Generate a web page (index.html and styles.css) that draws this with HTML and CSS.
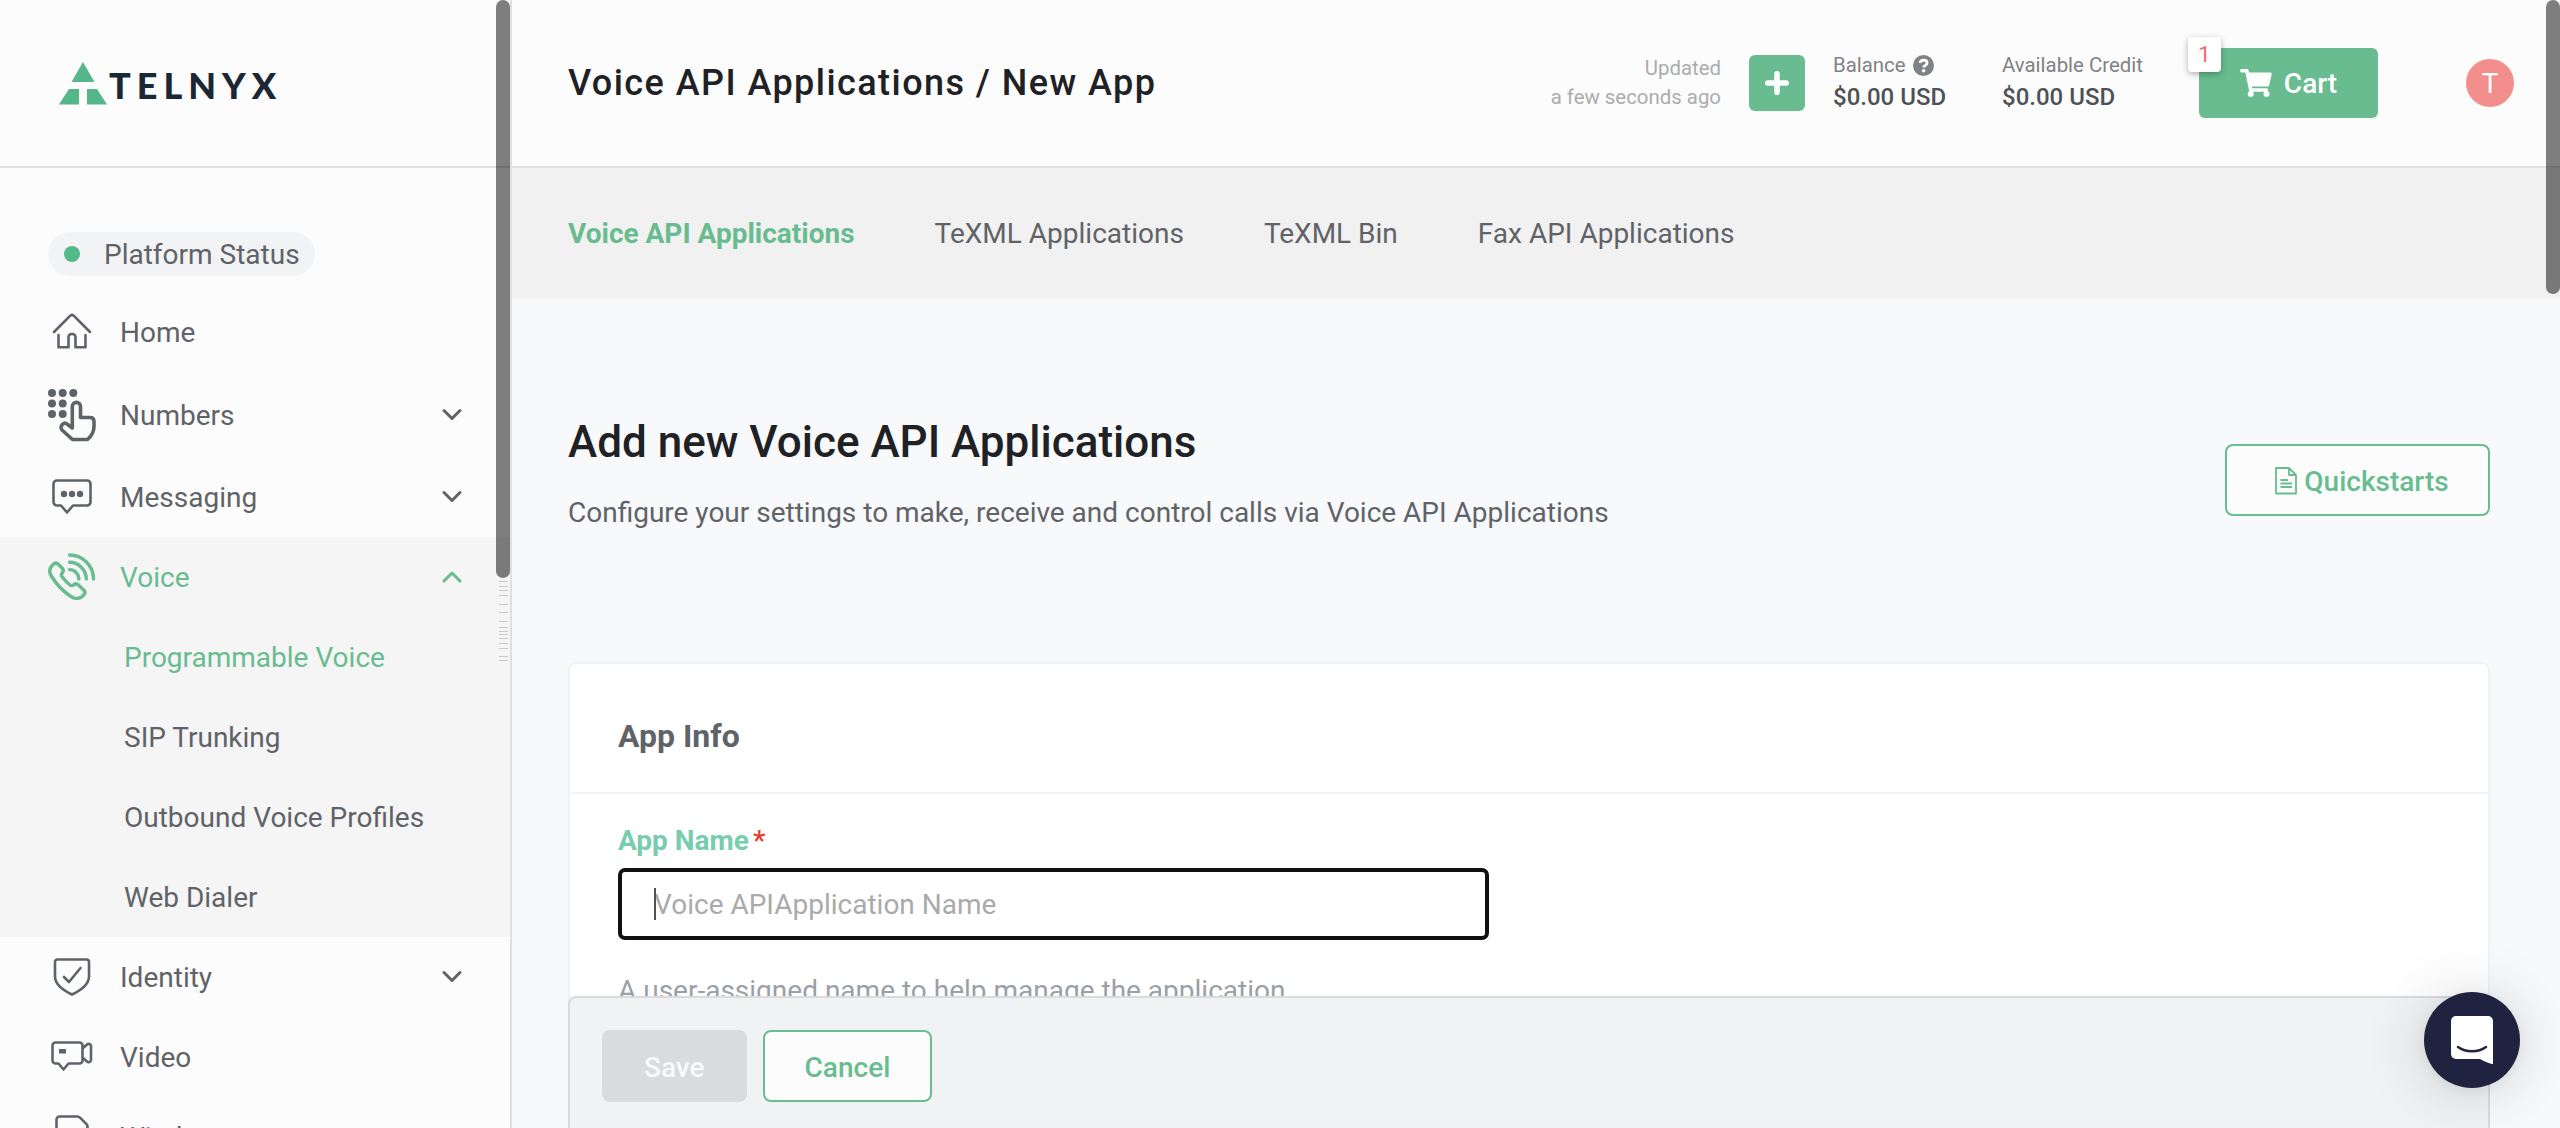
FILE: index.html
```html
<!DOCTYPE html>
<html lang="en">
<head>
<meta charset="utf-8">
<title>Voice API Applications / New App</title>
<link rel="stylesheet" href="styles.css">
</head>
<body>
<div class="app">
  <aside class="sidebar">
    <div class="brand">
      <svg class="brand-mark" width="48" height="43" viewBox="0 0 48 43"><path fill="#54b689" d="M24 0 35.500 20h-23zM10 27h10v15.500H0zM28 27h10l10 15.500H28z"/></svg>
      <span class="brand-name">TELNYX</span>
    </div>
    <nav class="nav">
      <a class="status"><i class="status-dot"></i><span>Platform Status</span></a>
      <a class="nav-row home">
        <svg class="ico" width="48" height="48" viewBox="0 0 48 48"><path d="M6 24 22.300 7.700a2.500 2.500 0 0 1 3.400 0L42 24M10.500 27v12.200h10V29a3 3 0 0 1 3-3h1a3 3 0 0 1 3 3v10.200h10V27"/></svg>
        <span>Home</span></a>
      <a class="nav-row numbers">
        <svg class="ico" width="48" height="54" viewBox="0 0 48 54"><g fill="#5f6368" stroke="none"><circle cx="4" cy="5" r="4"/><circle cx="14.700" cy="5" r="4"/><circle cx="25.300" cy="5" r="4"/><circle cx="4" cy="15.500" r="4"/><circle cx="14.700" cy="15.500" r="4"/><circle cx="4" cy="26" r="4"/><circle cx="14.700" cy="26" r="4"/></g><path stroke-width="3.600" d="M24.300 39V18.500a4 4 0 0 1 8.200 0V29.500h9.500c2.500 0 4 1.200 4 4v5c0 5-2.500 9.500-6.500 13H24.500L14 42c-1.500-1.600-1.200-4 .3-5.600 1.600-1.600 3.800-1.400 5.400.1l4.600 3.500"/></svg>
        <span>Numbers</span>
        <svg class="chev" width="20" height="14" viewBox="0 0 20 14"><path d="m2 2.500 8 8 8-8"/></svg></a>
      <a class="nav-row">
        <svg class="ico" width="48" height="48" viewBox="0 0 48 48"><path d="M9 7.500h30a3.500 3.500 0 0 1 3.500 3.500v18a3.500 3.500 0 0 1-3.500 3.500H25L19 39.500l-6-7H9A3.500 3.500 0 0 1 5.500 29V11A3.500 3.500 0 0 1 9 7.500z"/><g fill="#5f6368" stroke="none"><circle cx="16" cy="21" r="3.200"/><circle cx="24" cy="21" r="3.200"/><circle cx="32" cy="21" r="3.200"/></g></svg>
        <span>Messaging</span>
        <svg class="chev" width="20" height="14" viewBox="0 0 20 14"><path d="m2 2.500 8 8 8-8"/></svg></a>
      <div class="nav-group">
        <a class="nav-row active">
          <svg class="ico" width="48" height="48" viewBox="0 0 48 48"><path stroke-width="3.400" d="M5 11.500c2-2 4-1.500 5.500 0l3.800 3.800c1.500 1.500 1 3.500-.3 5-1 1.200-.7 2.500.3 3.800 2 2.800 4.500 5.500 7.500 7.800 1.300.9 2.600 1 3.800 0 1.500-1.200 3.500-1.200 4.800.1l5.300 5c1.500 1.500 1.600 3.300.2 4.900-3.300 4-8.300 4.500-12.600 1.800C15.500 38.700 8.500 31.500 3.300 23 .6 18.500 1.700 14.500 5 11.500zM21.500 2C34 2 45.500 12 45.500 26M21.500 9.300C30.500 9.300 38.300 17 38.300 26M21.500 16.600c5 0 9.300 4.400 9.300 9.400"/></svg>
          <span>Voice</span>
          <svg class="chev" width="20" height="14" viewBox="0 0 20 14"><path d="m2 11 8-8 8 8"/></svg></a>
        <a class="sub active"><span>Programmable Voice</span></a>
        <a class="sub"><span>SIP Trunking</span></a>
        <a class="sub"><span>Outbound Voice Profiles</span></a>
        <a class="sub"><span>Web Dialer</span></a>
      </div>
      <a class="nav-row">
        <svg class="ico" width="48" height="48" viewBox="0 0 48 48"><path d="M9.500 6.500h29A2.500 2.500 0 0 1 41 9v14.500C41 32 32.500 37.500 24 41.500 15.500 37.500 7 32 7 23.500V9a2.500 2.500 0 0 1 2.500-2.500zM16 24l5 5L32.500 15"/></svg>
        <span>Identity</span>
        <svg class="chev" width="20" height="14" viewBox="0 0 20 14"><path d="m2 2.500 8 8 8-8"/></svg></a>
      <a class="nav-row">
        <svg class="ico" width="48" height="48" viewBox="0 0 48 48"><path d="M7.500 9.500h24a3 3 0 0 1 3 3v15a3 3 0 0 1-3 3H20.500L15.500 36.500l-5-6h-3a3 3 0 0 1-3-3v-15a3 3 0 0 1 3-3zM34.500 15.500l4.500-4c1.500-1.200 4-.6 4 1.500v14c0 2.100-2.500 2.700-4 1.500l-4.500-4"/><path fill="#5f6368" stroke="none" d="M11 16h7v4.500h-7z"/></svg>
        <span>Video</span></a>
      <a class="nav-row">
        <svg class="ico" width="48" height="48" viewBox="0 0 48 48"><path d="M11.500 3.500h17.500a4 4 0 0 1 3 1.200l6.500 6.500a4 4 0 0 1 1 3V41a3 3 0 0 1-3 3h-25a3 3 0 0 1-3-3V6.500a3 3 0 0 1 3-3z"/></svg>
        <span>Wireless</span></a>
    </nav>
    <svg class="ticks" width="14" height="86" viewBox="0 0 14 86"><path stroke="#c9c9c9" stroke-width="1" d="M3 3.500h9M3 8.500h9M3 12.500h9M3 17.500h9M3 26.500h9M3 34.500h9M3 43.500h9M3 49.500h9M3 53.500h9M3 56.500h9M3 60.500h9M3 65.500h9M3 70.500h9M3 78.500h9M3 82.500h9"/></svg>
    <div class="thumb side-thumb"></div>
  </aside>

  <div class="page">
    <header class="topbar">
      <h1>Voice API Applications / New App</h1>
      <div class="updated"><span>Updated</span><span>a few seconds ago</span></div>
      <button class="add" aria-label="Add funds"><svg width="24" height="24" viewBox="0 0 24 24"><path fill="none" stroke="#fff" stroke-width="5.600" stroke-linecap="round" d="M12 2.800v18.400M2.800 12h18.400"/></svg></button>
      <div class="money balance"><div class="money-label"><span>Balance</span>
        <svg width="21" height="21" viewBox="0 0 21 21"><circle cx="10.500" cy="10.500" r="10.500" fill="#808285"/><path fill="none" stroke="#fff" stroke-width="2.800" d="M7 8c.4-1.900 1.700-2.900 3.500-2.900 2 0 3.600 1.100 3.600 2.800 0 2.500-3.400 2.300-3.400 4.600"/><circle cx="10.600" cy="15.800" r="1.800" fill="#fff"/></svg></div>
        <b>$0.00 USD</b></div>
      <div class="money"><div class="money-label"><span>Available Credit</span></div><b>$0.00 USD</b></div>
      <button class="cart"><svg width="32" height="28" viewBox="0 0 576 512"><path fill="#fff" d="M528.120 301.319l47.273-208C578.806 78.301 567.391 64 551.990 64H159.208l-9.166-44.810C147.758 8.021 137.930 0 126.529 0H24C10.745 0 0 10.745 0 24v16c0 13.255 10.745 24 24 24h69.883l70.248 343.435C147.325 417.100 136 435.222 136 456c0 30.928 25.072 56 56 56s56-25.072 56-56c0-15.674-6.447-29.835-16.824-40h209.647C430.447 426.165 424 440.326 424 456c0 30.928 25.072 56 56 56s56-25.072 56-56c0-22.172-12.888-41.332-31.579-50.405l5.517-24.276c3.413-15.018-8.002-29.319-23.403-29.319H218.117l-6.545-32h293.145c11.206 0 20.920-7.754 23.403-18.681z"/></svg><span>Cart</span><i class="badge">1</i></button>
      <div class="avatar">T</div>
    </header>
    <nav class="tabs">
      <a class="on">Voice API Applications</a><a>TeXML Applications</a><a>TeXML Bin</a><a>Fax API Applications</a>
    </nav>
    <main class="content">
      <div class="intro">
        <div>
          <h2>Add new Voice API Applications</h2>
          <p>Configure your settings to make, receive and control calls via Voice API Applications</p>
        </div>
        <button class="btn quick"><svg width="22" height="28" viewBox="0 0 22 28"><path fill="none" stroke="#68bc90" stroke-width="1.800" stroke-linejoin="round" d="M1 1h13l7 7v18.500H1zM14 1v7h7M5.500 13h7.500M5.500 16.500h11.500M5.500 20h11.500"/></svg><span>Quickstarts</span></button>
      </div>
      <section class="card">
        <h3>App Info</h3>
        <div class="form">
          <label><span>App Name</span><em>*</em></label>
          <div class="input"><i class="caret"></i><span>Voice APIApplication Name</span></div>
          <p>A user-assigned name to help manage the application</p>
        </div>
      </section>
    </main>
    <footer class="actions">
      <button class="btn save">Save</button>
      <button class="btn">Cancel</button>
    </footer>
  </div>
  <div class="thumb page-thumb"></div>
  <button class="chat" aria-label="Chat"><svg width="42" height="48" viewBox="0 0 42 48"><path fill="#fff" d="M5 0h32a5 5 0 0 1 5 5v43.300c-5-1.300-9-3-13-5.300H5a5 5 0 0 1-5-5V5a5 5 0 0 1 5-5z"/><path fill="none" stroke="#1f2340" stroke-width="2.500" stroke-linecap="round" d="M7 31c8 5.700 20 5.700 28 0"/></svg></button>
</div>
</body>
</html>
```
FILE: styles.css
```css
* { box-sizing: border-box; }
body { margin: 0; font-family: Roboto, sans-serif; font-size: 28px; color: #5f6368; }
button { font: inherit; padding: 0; border: 0; }
h1, h2, h3, p { margin: 0; }
i, em { font-style: normal; }
svg { flex: none; display: block; }
.app { position: relative; display: flex; width: 2560px; height: 1128px; overflow: hidden; background: #f8f9fb; }

.sidebar { position: relative; flex: none; width: 512px; border-right: 2px solid #e0e0e0; background: #fcfcfc; overflow: hidden; }
.brand { display: flex; align-items: flex-start; height: 168px; padding: 62px 0 0 59px; border-bottom: 2px solid #e0e0e0; }
.brand-name { margin: 2px 0 0 2px; font: 900 36px/43px Lato, sans-serif; letter-spacing: 6px; color: #1b2733; }
.nav { display: flex; flex-direction: column; }
.status { display: flex; align-items: center; align-self: flex-start; width: 267px; height: 44px; margin: 64px 0 16px 48px; padding-left: 16px; border-radius: 22px; background: #f1f3f4; }
.status-dot { width: 16px; height: 16px; margin-right: 24px; border-radius: 50%; background: #54b989; }
.nav-row { display: flex; align-items: center; flex: none; height: 80px; padding: 0 48px; gap: 24px; }
.nav-row.numbers { height: 85px; padding-top: 1px; }
.ico, .chev { fill: none; stroke: #5f6368; stroke-width: 2.6; stroke-linecap: round; stroke-linejoin: round; }
.chev { margin-left: auto; stroke-width: 3; }
.active { color: #68bc90; }
.active .ico, .active .chev { stroke: #68bc90; }
.nav-group { background: #f5f5f5; }
.sub { display: flex; align-items: center; height: 80px; padding-left: 124px; }
.thumb { position: absolute; width: 14px; border-radius: 7px; background: rgba(0, 0, 0, .5); }
.side-thumb { top: 0; right: 0; height: 578px; }
.page-thumb { top: 0; right: 0; height: 294px; }
.ticks { position: absolute; right: 0; top: 578px; }

.page { position: relative; flex: 1; display: flex; flex-direction: column; }
.topbar { display: flex; align-items: center; flex: none; height: 168px; padding: 0 46px 0 56px; border-bottom: 2px solid #e0e0e0; background: #fcfcfc; }
h1 { font-size: 36px; font-weight: 500; letter-spacing: .04em; color: #202124; }
.updated { display: flex; flex-direction: column; margin-left: auto; padding-bottom: 1px; font-size: 20.4px; line-height: 29px; text-align: right; color: #aaacae; }
.add { display: grid; place-items: center; width: 56px; height: 56px; margin: 0 28px; border-radius: 6px; background: #68bc90; }
.money { width: 197px; padding-bottom: 2px; }
.balance { width: 169px; }
.money-label { display: flex; align-items: center; gap: 7px; height: 30px; font-size: 20.4px; color: #808285; }
.money b { display: block; font-size: 24px; font-weight: 500; line-height: 34px; color: #4e5257; }
.cart { position: relative; display: flex; align-items: center; justify-content: center; gap: 12px; width: 179px; height: 70px; border-radius: 6px; background: #68bc90; color: #fff; font-weight: 500; }
.badge { position: absolute; left: -11px; top: -11px; width: 33px; height: 35px; border-radius: 4px; background: #fff; box-shadow: 0 2px 6px rgba(0, 0, 0, .3); font-size: 22px; font-weight: 400; line-height: 35px; text-align: center; color: #f2696b; }
.avatar { width: 48px; height: 48px; margin-left: 88px; border-radius: 50%; background: #f28f8c; color: #fff; line-height: 49px; text-align: center; }
.tabs { display: flex; align-items: center; flex: none; gap: 80px; height: 130px; padding: 0 56px; background: #f1f1f1; }
.on { font-weight: 700; color: #68bc90; }
.content { padding: 0 70px 0 56px; }
.intro { display: flex; justify-content: space-between; align-items: flex-start; height: 364px; padding-top: 118px; }
h2 { font-size: 44px; font-weight: 500; line-height: 52px; color: #202124; }
.intro p { margin-top: 27px; line-height: 36px; }
.btn { display: flex; align-items: center; justify-content: center; height: 72px; padding: 2px 40px 0; border: 2px solid #68bc90; border-radius: 8px; background: #fcfcfc; color: #68bc90; font-weight: 500; }
.quick { width: 265px; margin-top: 28px; padding: 2px 0 0 9px; gap: 7px; }
.card { height: 520px; border: 2px solid #f1f2f3; border-radius: 8px; background: #fff; }
h3 { display: flex; align-items: center; height: 130px; padding: 16px 48px 0; border-bottom: 2px solid #f1f2f3; font-size: 32px; font-weight: 700; line-height: 36px; }
.form { padding: 29px 48px; }
label { display: flex; gap: 4px; line-height: 36px; font-weight: 700; color: #77cdae; }
label em { color: #e8392b; font-weight: 500; }
.input { position: relative; display: flex; align-items: center; width: 871px; height: 72px; margin-top: 9px; padding-left: 32px; border: 4px solid #111; border-radius: 7px; color: #aaa; }
.caret { position: absolute; left: 32px; top: 16px; width: 2px; height: 32px; background: #4e5257; }
.form p { margin-top: 33px; line-height: 36px; color: #9aa0a6; }
.actions { position: absolute; left: 56px; right: 70px; top: 996px; bottom: 0; display: flex; gap: 16px; padding: 32px; border: 2px solid #dadbdf; border-bottom: 0; border-radius: 8px 8px 0 0; background: #f1f2f4; }
.save { border-color: #dadbdf; background: #dadbdf; color: #f9f9fb; }
.chat { position: absolute; right: 40px; bottom: 40px; display: grid; place-items: center; width: 96px; height: 96px; border-radius: 50%; background: #1f2340; box-shadow: 0 2px 12px rgba(0, 0, 0, .06), 0 4px 64px rgba(0, 0, 0, .16); }
```
